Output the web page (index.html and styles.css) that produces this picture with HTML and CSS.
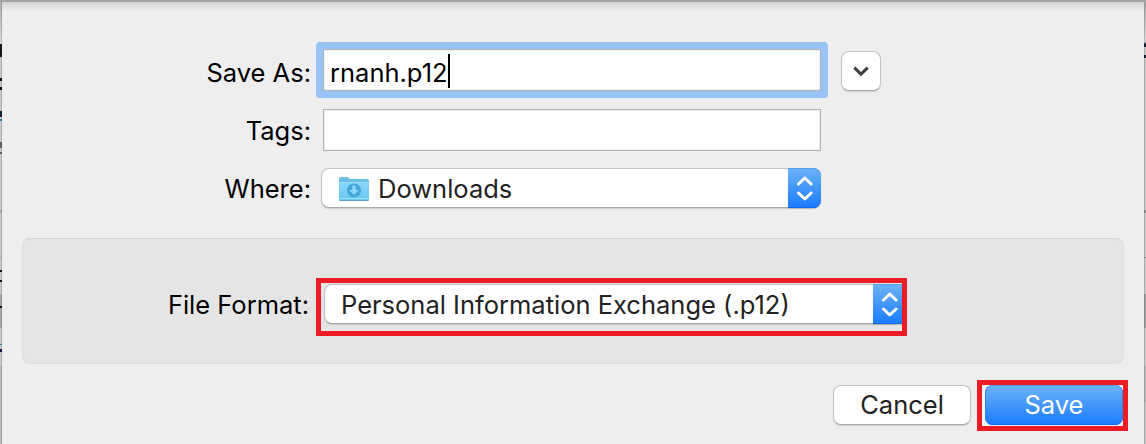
FILE: index.html
```
<!DOCTYPE html>
<html lang="en">
<head>
<meta charset="utf-8">
<title>Save As</title>
<link rel="stylesheet" href="styles.css">
</head>
<body>
<div class="window">
  <div class="edge edge-left"></div>
  <main class="sheet">
    <div class="row row-name">
      <label class="label">Save As:</label>
      <div class="field focused"><span class="name">rnanh.p12</span><i class="caret"></i></div>
      <button class="expand"><svg width="18" height="12" viewBox="0 0 18 12"><path d="M2.300 2.700 9 9.100l6.700-6.400"/></svg></button>
    </div>
    <div class="row row-tags">
      <label class="label">Tags:</label>
      <div class="field"></div>
    </div>
    <div class="row row-where">
      <label class="label">Where:</label>
      <div class="select">
        <svg class="folder" width="32" height="28" viewBox="0 0 32 28">
          <defs><linearGradient id="f" x1="0" y1="0" x2="0" y2="1"><stop offset="0" stop-color="#86d5f8"/><stop offset="1" stop-color="#6ac8f4"/></linearGradient></defs>
          <path d="M1 3q0-2 2-2h6q1 0 1.700.8l1 1.200h17.300q2 0 2 2v18.500q0 1.500-2 1.500H3q-2 0-2-1.500z" fill="#6bbfe6"/>
          <path d="M1 6h30v17q0 1-1.500 1H2.500Q1 24 1 23z" fill="url(#f)"/>
          <path d="M1.500 6.500h29M1.500 22.500h29" stroke="#9adffa"/>
          <path d="M1.500 24.500h29" stroke="#58a9d0"/>
          <circle cx="16" cy="14.500" r="7" fill="#43a5d8"/>
          <path d="M14.300 9.500h3.400v4.500h3L16 19l-4.700-5h3z" fill="#8bd9fa"/>
        </svg>
        <span class="value">Downloads</span>
        <span class="stepper"><svg width="16" height="25" viewBox="0 0 16 25"><path d="m1.500 8 6.300-6 6.300 6M1.500 17l6.300 6 6.300-6"/></svg></span>
      </div>
    </div>
    <section class="group">
      <label class="label">File Format:</label>
      <div class="mark mark-format">
        <div class="select">
          <span class="value">Personal Information Exchange (.p12)</span>
          <span class="stepper"><svg width="16" height="25" viewBox="0 0 16 25"><path d="m1.500 8 6.300-6 6.300 6M1.500 17l6.300 6 6.300-6"/></svg></span>
        </div>
      </div>
    </section>
    <footer class="actions">
      <button class="button">Cancel</button>
      <div class="mark mark-save"><button class="button primary">Save</button></div>
    </footer>
  </main>
  <div class="edge edge-right"></div>
</div>
</body>
</html>
```
FILE: styles.css
```
* { box-sizing: border-box; }
body {
  margin: 0;
  overflow: hidden;
  font: 25.5px/40px Inter, "Liberation Sans", sans-serif;
  color: #000;
}
button { font: inherit; color: inherit; padding: 0; }
svg { display: block; fill: none; flex: none; }
span { white-space: nowrap; }
.window {
  display: flex;
  width: 1146px;
  height: 444px;
  border-top: 2px solid #a3a3a3;
}

/* Slivers of the document behind the sheet */
.edge { width: 2px; flex: none; }
.edge-left {
  border-right: 1px solid #0000002a;
  background: linear-gradient(#b0b0b0 0, #ddd 42px, #181818 42px 55px, #ccc 55px 76px, #111 76px 79px, #ccc 79px 85px, #111 85px 88px, #ccc 88px 109px, #142638 109px 115px, #ccc 115px 117px, #2888b8 117px 119px, #ccc 119px 140px, #65616d 140px 146px, #ccc 146px 150px, #65616d 150px 152px, #ccc 152px 208px, #aaa 208px 211px, #ccc 211px 255px, #aaa 255px 256px, #ccc 256px 268px, #111 268px 270px, #ccc 270px 278px, #111 278px 280px, #ccc 280px 292px, #aaa 292px 304px, #111 304px 306px, #aaa 306px 326px, #ccc 326px 342px, #2888b8 342px 343px, #ccc 343px 347px, #141450 347px 350px, #ccc 350px 364px, #bbb 364px);
}
.edge-right {
  border-left: 1px solid #0000002a;
  background: linear-gradient(#b0b0b0 0, #ddd 40px, #18263a 42px 45px, #ccc 45px 53px, #18263a 53px 56px, #ccc 56px 208px, #999 208px 211px, #ccc 211px 255px, #999 255px 256px, #ccc 256px 292px, #a4a4a4 292px 326px, #ccc 326px 364px, #bbb 364px 400px, #c8c8c8 400px);
}

.sheet {
  width: 1142px;
  height: 442px;
  padding-top: 47px;
  background: linear-gradient(#d2d2d2, #dcdcdc 3px, #e7e7e7 7px, #eee 9px, #eee);
}
.row { display: flex; align-items: center; }
.label { width: 309px; padding-top: 2px; text-align: right; flex: none; }
.row-name { height: 42px; }
.row-name .label { padding-top: 5px; }
.row-tags { height: 42px; margin-top: 18px; }
.row-where { height: 40px; margin-top: 17px; }
.field {
  display: flex;
  align-items: center;
  width: 498px;
  height: 42px;
  margin-left: 12px;
  padding-left: 6px;
  border: 1px solid #b2b2b2;
  background: #fff;
  box-shadow: inset 0 0 0 1px #f0f0f0;
}
.focused {
  border-radius: 1px;
  box-shadow: 0 0 0 7px #98c4f5, inset 0 0 0 1px #f0f0f0;
}
.name { padding-top: 5px; }
.caret { width: 2px; height: 34px; margin-top: 1px; background: #000; }
.expand, .button, .select {
  border: 1px solid #c3c3c3;
  border-bottom-color: #aaa;
  border-radius: 8px;
  background: #fff;
  box-shadow: 0 1px 1px #0002;
}
.expand {
  display: grid;
  place-items: center;
  width: 40px;
  height: 40px;
  margin: 2px 0 0 20px;
}
.expand path { stroke: #404040; stroke-width: 3; }
.select {
  display: flex;
  align-items: center;
  width: 500px;
  height: 40px;
  margin-left: 10px;
  color: #222;
}
.folder { margin: 3px 0 0 16px; }
.value { margin-left: 8px; padding-top: 2px; }
.stepper {
  display: grid;
  place-items: center;
  width: 33px;
  height: 40px;
  margin: -1px -1px -1px auto;
  border-radius: 0 8px 8px 0;
  background: linear-gradient(#6db3f8, #1a7bfe);
  box-shadow: inset 0 1px 0 #529fee, inset 0 -1px 0 #1269ea, 0 1px 1px #0002;
  flex: none;
}
.stepper path { stroke: #fff; stroke-width: 3; stroke-linecap: round; stroke-linejoin: round; }
.group {
  display: flex;
  align-items: flex-start;
  width: 1102px;
  height: 126px;
  margin: 30px 0 0 20px;
  padding-top: 39px;
  border: 1px solid #dfdfdf;
  border-top-color: #d5d5d5;
  border-radius: 8px;
  background: #e5e5e5;
}
.group .label { width: 286px; margin-right: 1px; padding-top: 7px; }
.mark { border: 5px solid #ed1c24; flex: none; }
.mark-format { width: 591px; height: 58px; margin-left: 6px; padding: 1px 0 0 3px; }
.mark .select { width: 578px; margin: 0; }
.mark .value { margin-left: 16px; }
.mark .stepper { width: 29px; border-radius: 0; }
.mark .stepper svg { margin-left: 5px; }
.actions { display: flex; justify-content: flex-end; margin-top: 16px; padding-right: 16px; }
.button { width: 138px; height: 40px; line-height: 38px; color: #222; margin: 5px 6px 0 0; }
.mark-save { width: 151px; height: 51px; padding-left: 3px; background: #f2f2f2; }
.primary {
  display: block;
  margin: 0;
  border: 0;
  line-height: 40px;
  color: #fff;
  background: linear-gradient(#6db3f8, #1a7bfe);
  box-shadow: inset 0 1px 0 #529fee, inset 0 -1px 0 #1269ea, inset 1px 0 0 #3585ef, inset -1px 0 0 #3585ef;
}
```
